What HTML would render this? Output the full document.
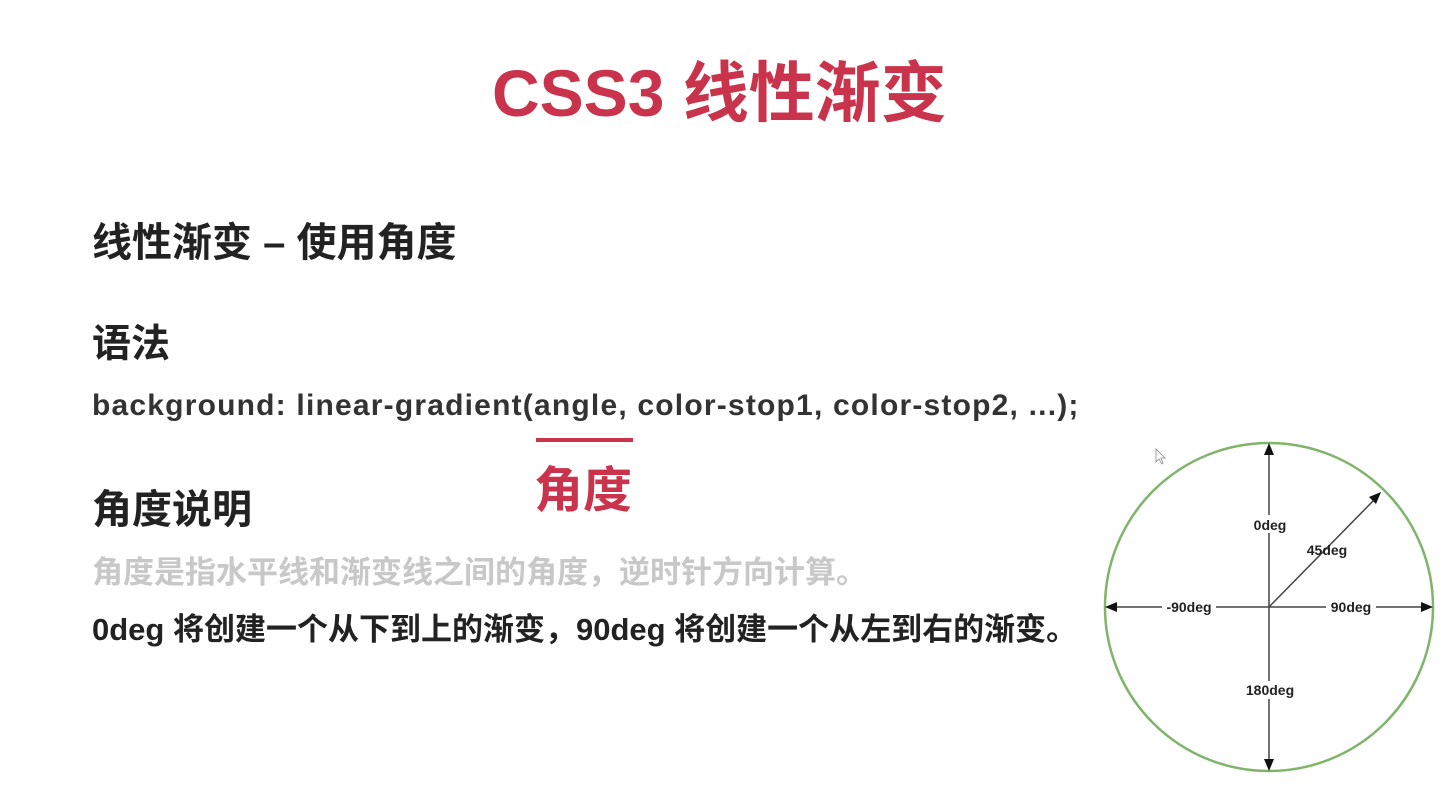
<!DOCTYPE html>
<html><head><meta charset="utf-8"><style>
body{margin:0;width:1456px;height:797px;background:#fff;position:relative;overflow:hidden;font-family:"Liberation Sans","Noto Sans CJK SC",sans-serif;}
.t{position:absolute;white-space:nowrap;font-weight:bold;line-height:1;}
</style></head><body>
<div class="t" style="left:492px;top:60px;font-size:66px;color:#c9334b;">CSS3 线性渐变</div>
<div class="t" style="left:92px;top:223px;font-size:40px;color:#222;">线性渐变 – 使用角度</div>
<div class="t" style="left:92px;top:325px;font-size:39px;color:#222;">语法</div>
<div class="t" style="left:92px;top:391px;font-size:30px;color:#333;letter-spacing:1.2px;">background: linear-gradient(angle, color-stop1, color-stop2, ...);</div>
<div style="position:absolute;left:536px;top:438px;width:97px;height:4px;background:#c9334b;"></div>
<div class="t" style="left:534px;top:467px;font-size:49px;color:#c9334b;">角度</div>
<div class="t" style="left:92px;top:490px;font-size:40px;color:#222;">角度说明</div>
<div class="t" style="left:92px;top:557px;font-size:31px;color:#c8c8c8;">角度是指水平线和渐变线之间的角度，逆时针方向计算。</div>
<div class="t" style="left:92px;top:614px;font-size:31px;color:#222;">0deg 将创建一个从下到上的渐变，90deg 将创建一个从左到右的渐变。</div>
<svg style="position:absolute;left:0;top:0" width="1456" height="797">
<circle cx="1269" cy="607" r="164" fill="none" stroke="#7fb46a" stroke-width="2.5"/>
<g stroke="#444" stroke-width="1.5">
<line x1="1269" y1="452" x2="1269" y2="762"/>
<line x1="1114" y1="607" x2="1424" y2="607"/>
<line x1="1269" y1="607" x2="1374" y2="500"/>
</g>
<g fill="#111">
<polygon points="1269,443 1264,455 1274,455"/>
<polygon points="1269,771 1264,759 1274,759"/>
<polygon points="1105,607 1117,602 1117,612"/>
<polygon points="1433,607 1421,602 1421,612"/>
<polygon points="1381,492 1369,497 1376,504"/>
</g>
<g font-family="Liberation Sans" font-weight="bold" font-size="14" fill="#222" text-anchor="middle">
<rect x="1249" y="515" width="40" height="18" fill="#fff"/>
<text x="1270" y="530">0deg</text>
<text x="1327" y="555">45deg</text>
<rect x="1162" y="598" width="54" height="18" fill="#fff"/>
<text x="1189" y="612">-90deg</text>
<rect x="1326" y="598" width="50" height="18" fill="#fff"/>
<text x="1351" y="612">90deg</text>
<rect x="1242" y="681" width="56" height="18" fill="#fff"/>
<text x="1270" y="695">180deg</text>
</g>
<path d="M1156 449 L1156 462 L1159 459 L1162 464 L1163 463 L1161 458 L1165 458 Z" fill="#fff" stroke="#888" stroke-width="0.8"/>
</svg>
</body></html>
